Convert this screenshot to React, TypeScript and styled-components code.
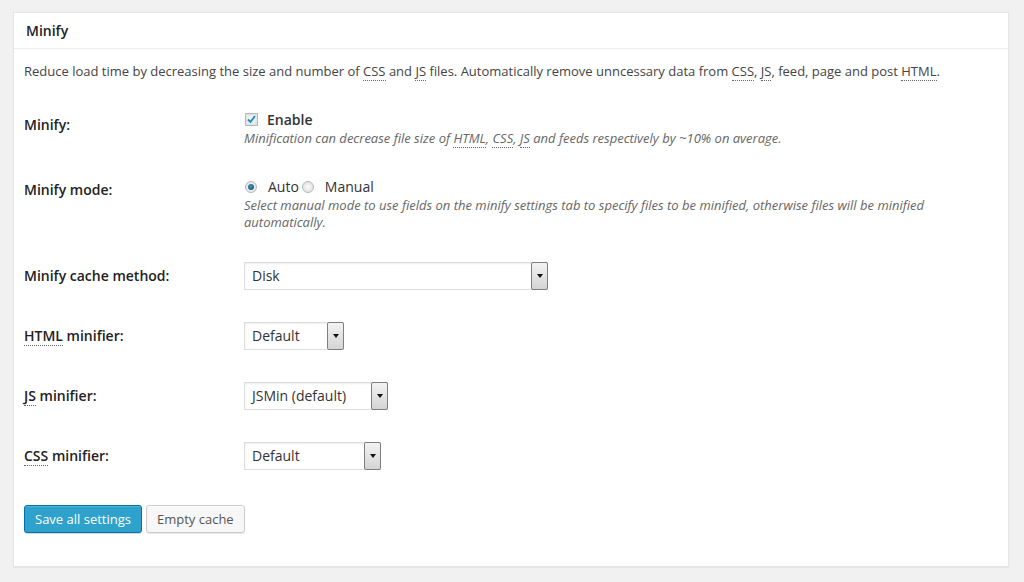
import React from "react";
import styled, { createGlobalStyle } from "styled-components";

const Global = createGlobalStyle`
  html, body { margin: 0; padding: 0; background: #f1f1f1; }
  body { font-family: "Open Sans", "Liberation Sans", sans-serif; font-size: 13px; color: #444; }
  * { box-sizing: border-box; }
`;

const Page = styled.div`
  padding: 12px 15px 16px 13px;
`;

const Panel = styled.div`
  background: #fff;
  border: 1px solid #e5e5e5;
  box-shadow: 0 1px 1px rgba(0, 0, 0, 0.04);
`;

const PanelHeader = styled.h3`
  margin: 0;
  padding: 8px 12px 7px;
  font-size: 14px;
  line-height: 20px;
  font-weight: 600;
  color: #222;
  border-bottom: 1px solid #eee;
`;

const Inside = styled.div`
  padding: 0 10px 33px;
`;

const Intro = styled.p`
  margin: 13px 0 0;
  line-height: 19px;
`;

const Abbr = styled.abbr`
  text-decoration: none;
  border-bottom: 1px dotted #666;
  cursor: help;
`;

const Table = styled.div`
  display: grid;
  grid-template-columns: 210px 1fr;
  margin-top: 14px;
`;

const Label = styled.div<{ $pad?: number }>`
  padding: ${(p) => p.$pad ?? 20}px 10px 20px 0;
  font-weight: 600;
  font-size: 14px;
  color: #222;
  line-height: 19px;
`;

const Field = styled.div`
  padding: 15px 10px;
  line-height: 19px;
`;

const Inline = styled.div`
  display: flex;
  align-items: center;
  font-size: 14px;
  color: #333;
`;

const Check = styled.span`
  width: 13px;
  height: 13px;
  border: 1px solid #b4b9be;
  background: linear-gradient(#f4f4f4, #e6e6e6);
  box-shadow: inset 0 1px 2px rgba(0, 0, 0, 0.1);
  display: inline-flex;
  align-items: center;
  justify-content: center;
  margin: 0 9px 0 1px;
`;

const Radio = styled.span<{ $on?: boolean }>`
  width: 12px;
  height: 12px;
  border-radius: 50%;
  border: 1px solid #b4b9be;
  background: radial-gradient(circle, #fafafa, #dcdcdc);
  display: inline-flex;
  align-items: center;
  justify-content: center;
  margin: 0 11px 0 1px;
  &::after {
    content: "";
    display: ${(p) => (p.$on ? "block" : "none")};
    width: 6px;
    height: 6px;
    border-radius: 50%;
    background: radial-gradient(circle at 40% 35%, #3f93b7, #164f6a);
  }
`;

const OptionText = styled.span<{ $bold?: boolean }>`
  font-weight: ${(p) => (p.$bold ? 600 : 400)};
  margin-right: 2px;
`;

const Desc = styled.p`
  margin: 1px 0 0;
  font-style: italic;
  color: #666;
  line-height: 17px;
  max-width: 690px;
`;

const SelectBox = styled.div<{ $w: number }>`
  width: ${(p) => p.$w}px;
  height: 28px;
  margin: 1px 0;
  border: 1px solid #ddd;
  box-shadow: inset 0 1px 2px rgba(0, 0, 0, 0.07);
  background: #fff;
  display: flex;
  align-items: stretch;
  font-size: 14px;
  color: #333;
`;

const SelectValue = styled.span`
  flex: 1;
  padding: 0 7px;
  line-height: 26px;
`;

const Arrow = styled.span`
  width: 17px;
  margin: -1px -1px -1px 0;
  border: 1px solid #7f7f7f;
  border-radius: 2px;
  background: linear-gradient(#f3f3f3, #d4d4d4);
  display: flex;
  align-items: center;
  justify-content: center;
  &::after {
    content: "";
    border-left: 3px solid transparent;
    border-right: 3px solid transparent;
    border-top: 4px solid #111;
  }
`;

const ControlField = styled.div`
  padding: 15px 10px;
`;

const Buttons = styled.div`
  display: flex;
  gap: 4px;
  margin-top: 19px;
`;

const Button = styled.button<{ $primary?: boolean }>`
  height: 28px;
  padding: 0 10px 1px;
  font-family: inherit;
  font-size: 13px;
  border-radius: 3px;
  border: 1px solid ${(p) => (p.$primary ? "#0074a2" : "#ccc")};
  background: ${(p) => (p.$primary ? "#2ea2cc" : "#f7f7f7")};
  color: ${(p) => (p.$primary ? "#fff" : "#555")};
  box-shadow: ${(p) =>
    p.$primary
      ? "inset 0 1px 0 rgba(120,200,230,.5), 0 1px 0 rgba(0,0,0,.15)"
      : "inset 0 1px 0 #fff, 0 1px 0 rgba(0,0,0,.08)"};
`;

const Select = ({ value, width }: { value: string; width: number }) => (
  <SelectBox $w={width}>
    <SelectValue>{value}</SelectValue>
    <Arrow />
  </SelectBox>
);

export default function App() {
  return (
    <Page>
      <Global />
      <Panel>
        <PanelHeader>Minify</PanelHeader>
        <Inside>
          <Intro>
            Reduce load time by decreasing the size and number of <Abbr>CSS</Abbr> and <Abbr>JS</Abbr> files.
            Automatically remove unncessary data from <Abbr>CSS</Abbr>, <Abbr>JS</Abbr>, feed, page and post{" "}
            <Abbr>HTML</Abbr>.
          </Intro>
          <Table>
            <Label>Minify:</Label>
            <Field>
              <Inline>
                <Check>
                  <svg width="11" height="11" viewBox="0 0 11 11">
                    <path d="M2 5.5 L4.5 8 L9 2" fill="none" stroke="#1e8cbe" strokeWidth="1.8" />
                  </svg>
                </Check>
                <OptionText $bold>Enable</OptionText>
              </Inline>
              <Desc>
                Minification can decrease file size of <Abbr>HTML</Abbr>, <Abbr>CSS</Abbr>, <Abbr>JS</Abbr> and feeds
                respectively by ~10% on average.
              </Desc>
            </Field>

            <Label $pad={18}>Minify mode:</Label>
            <Field>
              <Inline>
                <Radio $on />
                <OptionText>Auto</OptionText>
                <Radio />
                <OptionText>Manual</OptionText>
              </Inline>
              <Desc>
                Select manual mode to use fields on the minify settings tab to specify files to be minified, otherwise
                files will be minified automatically.
              </Desc>
            </Field>

            <Label>Minify cache method:</Label>
            <ControlField>
              <Select value="Disk" width={304} />
            </ControlField>

            <Label>
              <Abbr>HTML</Abbr> minifier:
            </Label>
            <ControlField>
              <Select value="Default" width={100} />
            </ControlField>

            <Label>
              <Abbr>JS</Abbr> minifier:
            </Label>
            <ControlField>
              <Select value="JSMin (default)" width={144} />
            </ControlField>

            <Label>
              <Abbr>CSS</Abbr> minifier:
            </Label>
            <ControlField>
              <Select value="Default" width={137} />
            </ControlField>
          </Table>
          <Buttons>
            <Button $primary>Save all settings</Button>
            <Button>Empty cache</Button>
          </Buttons>
        </Inside>
      </Panel>
    </Page>
  );
}
